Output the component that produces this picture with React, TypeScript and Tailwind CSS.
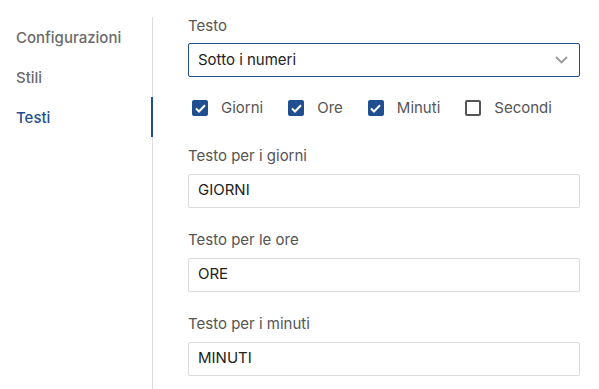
import { useState } from 'react'

const tabs = ['Configurazioni', 'Stili', 'Testi']

function Check({ checked, label }: { checked: boolean; label: string }) {
  return (
    <label className="flex items-center gap-[13px]">
      {checked ? (
        <span className="w-[16px] h-[16px] rounded-[2px] bg-[#1f4f8f] flex items-center justify-center">
          <svg width="11" height="9" viewBox="0 0 11 9" fill="none">
            <path d="M1 4.5l3 3L10 1.3" stroke="white" strokeWidth="2" />
          </svg>
        </span>
      ) : (
        <span className="w-[16px] h-[16px] rounded-[2px] border-2 border-[#555]" />
      )}
      <span className="text-[15px] text-[#555]">{label}</span>
    </label>
  )
}

function Field({ label, value, first }: { label: string; value: string; first?: boolean }) {
  return (
    <div className="flex flex-col">
      <span className={'text-[15px] leading-[20px] text-[#555] ' + (first ? 'mt-[26px]' : 'mt-[22px]')}>{label}</span>
      <div className="mt-[8px] h-[34px] border border-[#dcdcdc] rounded-[2px] flex items-center px-[9px] text-[15px] text-[#222]">
        {value}
      </div>
    </div>
  )
}

export default function App() {
  const [active] = useState(2)

  return (
    <div className="w-[599px] h-[389px] bg-white flex pt-[17px]" style={{ fontFamily: 'Inter, "Noto Sans", sans-serif' }}>
      <div className="w-[153px] border-r border-[#dcdcdc] flex flex-col">
        {tabs.map((t, i) => (
          <div
            key={t}
            className={
              'h-[40px] pl-[16px] pt-[2px] flex items-center text-[15px] font-medium -mr-px ' +
              (i === active ? 'text-[#1f4f8f] border-r-2 border-[#1f4f8f]' : 'text-[#6b6b6b]')
            }
          >
            {t}
          </div>
        ))}
      </div>

      <div className="w-[392px] ml-[35px] flex flex-col">
        <span className="text-[15px] leading-[20px] text-[#555] -mt-[1px]">Testo</span>
        <div className="mt-[7px] h-[34px] border border-[#1f4f8f] rounded-[2px] flex items-center justify-between px-[9px] text-[15px] text-[#222]">
          <span>Sotto i numeri</span>
          <svg width="13" height="8" viewBox="0 0 13 8" fill="none" className="mr-[2px]">
            <path d="M1 1l5.5 5.5L12 1" stroke="#9a9a9a" strokeWidth="1.8" />
          </svg>
        </div>

        <div className="mt-[20px] pl-[4px] flex items-center gap-[25px]">
          <Check checked label="Giorni" />
          <Check checked label="Ore" />
          <Check checked label="Minuti" />
          <Check checked={false} label="Secondi" />
        </div>

        <Field first label="Testo per i giorni" value="GIORNI" />
        <Field label="Testo per le ore" value="ORE" />
        <Field label="Testo per i minuti" value="MINUTI" />
      </div>
    </div>
  )
}
